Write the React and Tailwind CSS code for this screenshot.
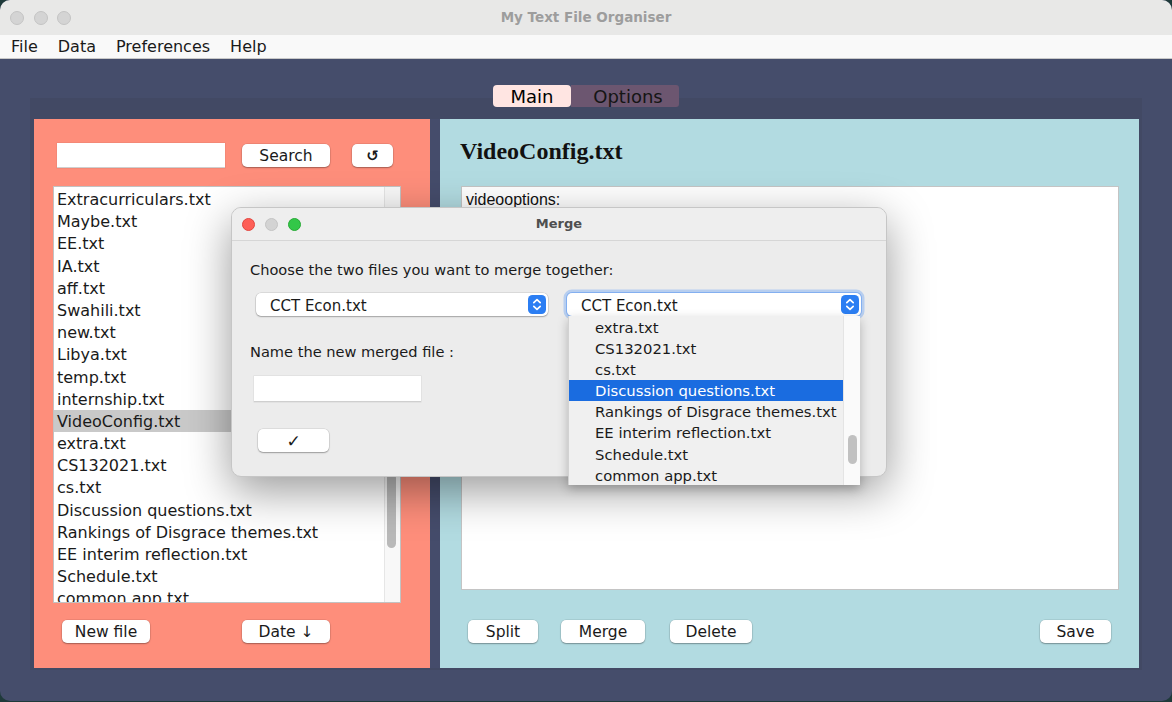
import React from "react";

const files = [
  "Extracurriculars.txt",
  "Maybe.txt",
  "EE.txt",
  "IA.txt",
  "aff.txt",
  "Swahili.txt",
  "new.txt",
  "Libya.txt",
  "temp.txt",
  "internship.txt",
  "VideoConfig.txt",
  "extra.txt",
  "CS132021.txt",
  "cs.txt",
  "Discussion questions.txt",
  "Rankings of Disgrace themes.txt",
  "EE interim reflection.txt",
  "Schedule.txt",
  "common app.txt",
];

const popupItems = [
  "extra.txt",
  "CS132021.txt",
  "cs.txt",
  "Discussion questions.txt",
  "Rankings of Disgrace themes.txt",
  "EE interim reflection.txt",
  "Schedule.txt",
  "common app.txt",
];

function Btn({ className, children }) {
  return (
    <div
      className={`h-[23px] pt-[2px] bg-white rounded-[5px] shadow-[0_0_0_0.5px_rgba(0,0,0,0.12),0_1px_1.5px_rgba(0,0,0,0.3)] flex items-center justify-center text-[#1a1a1a] shrink-0 ${className}`}
    >
      {children}
    </div>
  );
}

function Stepper() {
  return (
    <svg width="18" height="19" viewBox="0 0 18 19">
      <rect width="18" height="19" rx="4.5" fill="#2b7ef3" />
      <path d="M5.8 7.6 L9 4.6 L12.2 7.6" stroke="white" strokeWidth="1.7" fill="none" strokeLinecap="round" strokeLinejoin="round" />
      <path d="M5.8 11.4 L9 14.4 L12.2 11.4" stroke="white" strokeWidth="1.7" fill="none" strokeLinecap="round" strokeLinejoin="round" />
    </svg>
  );
}

function Combo({ className, focused }) {
  return (
    <div
      className={`h-[23px] bg-white rounded-[5px] flex items-center pl-[14px] pr-[2px] text-[15px] text-[#1a1a1a] ${
        focused
          ? "shadow-[0_0_0_1px_rgba(90,150,240,0.55),0_0_0_3.5px_rgba(120,170,245,0.45)]"
          : "shadow-[0_0_0_0.5px_rgba(0,0,0,0.15),0_1px_1.5px_rgba(0,0,0,0.25)]"
      } ${className}`}
    >
      <span className="flex-1 pt-[3px]">CCT Econ.txt</span>
      <Stepper />
    </div>
  );
}

export default function App() {
  return (
    <div className="w-[1172px] h-[702px] bg-[#1f3a3a] overflow-hidden font-['DejaVu_Sans',sans-serif] text-black">
      <div className="relative w-full h-[701px] rounded-[10px] overflow-hidden bg-[#454d6b] flex flex-col">
        {/* Title bar */}
        <div className="h-[35px] bg-[#e8e8e7] grid grid-cols-[1fr_auto_1fr] items-center shrink-0">
          <div className="flex items-center gap-[9.5px] pl-[10px]">
            <div className="w-[14px] h-[14px] rounded-full bg-[#d4d4d4] border border-[#c4c4c4]" />
            <div className="w-[14px] h-[14px] rounded-full bg-[#d4d4d4] border border-[#c4c4c4]" />
            <div className="w-[14px] h-[14px] rounded-full bg-[#d4d4d4] border border-[#c4c4c4]" />
          </div>
          <div className="text-[13.5px] font-bold text-[#9d9d9d]">My Text File Organiser</div>
          <div />
        </div>

        {/* Menu bar */}
        <div className="h-[24px] bg-[#f9f9f9] border-b border-[#c9c9c9] flex items-center pl-[11px] gap-[20px] text-[16px] text-[#1a1a1a] shrink-0">
          <span>File</span>
          <span>Data</span>
          <span>Preferences</span>
          <span>Help</span>
        </div>

        {/* Content */}
        <div className="flex-1 flex flex-col pt-[26px]">
          <div className="flex justify-center h-[22px] relative z-10 text-[18px]">
            <div className="w-[78px] h-[22px] bg-[#ffe5e2] rounded-[4px] flex items-center justify-center">Main</div>
            <div className="w-[108px] h-[22px] bg-[#6c5670] rounded-r-[3px] flex items-center justify-center pl-[6px] text-[#151515]">
              Options
            </div>
          </div>

          <div className="mt-[-9px] ml-[30px] w-[1112px] h-[572px] bg-[#424964] pt-[21px] pl-[4px] pr-[3px] pb-[2px] flex">
            {/* Left panel */}
            <div className="w-[396px] bg-[#fe8e7b] flex flex-col">
              <div className="mt-[24px] ml-[23px] flex items-start h-[25px]">
                <div className="w-[168px] h-[25px] bg-white border-b border-[#cfcfcf] shadow-[0_0_0_0.5px_rgba(0,0,0,0.08)]" />
                <Btn className="ml-[17px] mt-[1px] w-[88px] text-[15.5px]">Search</Btn>
                <Btn className="ml-[22px] mt-[1px] w-[41px] text-[15px] font-bold">↺</Btn>
              </div>

              <div className="mt-[18px] ml-[19px] w-[348px] h-[417px] bg-white border border-[#c2c2c2] flex overflow-hidden">
                <div className="flex-1 pt-[1px] overflow-hidden">
                  {files.map((f) => (
                    <div
                      key={f}
                      className={`h-[22.2px] leading-[22.2px] pt-[1px] pl-[3px] text-[16px] whitespace-nowrap text-[#1a1a1a] ${
                        f === "VideoConfig.txt" ? "bg-[#c9c9c9]" : ""
                      }`}
                    >
                      {f}
                    </div>
                  ))}
                </div>
                <div className="w-[16px] bg-[#f8f8f8] border-l border-[#e6e6e6] flex flex-col">
                  <div className="mt-[286px] ml-[2px] w-[9px] h-[75px] rounded-full bg-[#b9b9b9]" />
                </div>
              </div>

              <div className="mt-[17px] flex">
                <Btn className="ml-[28px] w-[88px] text-[15.5px]">New file</Btn>
                <Btn className="ml-[92px] w-[88px] text-[15.5px]">Date ↓</Btn>
              </div>
            </div>

            <div className="w-[10px] bg-[#454c6b]" />

            {/* Right panel */}
            <div className="flex-1 bg-[#b2dbe1] flex flex-col">
              <div className="mt-[18px] ml-[20px] h-[28px] leading-[28px] text-[24px] font-bold font-['Liberation_Serif',serif] text-[#111]">
                VideoConfig.txt
              </div>
              <div className="mt-[21px] ml-[21px] w-[658px] h-[404px] bg-white border border-[#c4c4c4] px-[4px] pt-[3px] font-['Liberation_Sans',sans-serif] text-[16px] leading-[20px] text-[#111]">
                videooptions:
              </div>
              <div className="mt-[30px] flex">
                <Btn className="ml-[28px] w-[70px] text-[15.5px]">Split</Btn>
                <Btn className="ml-[23px] w-[84px] text-[15.5px]">Merge</Btn>
                <Btn className="ml-[25px] w-[82px] text-[15.5px]">Delete</Btn>
                <Btn className="ml-auto mr-[28px] w-[71px] text-[15.5px]">Save</Btn>
              </div>
            </div>
          </div>
        </div>

        {/* Merge dialog */}
        <div className="absolute left-[231px] top-[207px] w-[656px] h-[270px] rounded-[10px] bg-[#ececec] border border-[#c6c6c6] shadow-[0_14px_45px_rgba(0,0,0,0.4)] flex flex-col overflow-hidden">
          <div className="h-[33px] border-b border-[#d6d6d6] bg-[#eeeeee] grid grid-cols-[1fr_auto_1fr] items-center shrink-0">
            <div className="flex items-center gap-[10px] pl-[9.5px]">
              <div className="w-[13px] h-[13px] rounded-full bg-[#fe5f57] border border-[#e2463f]" />
              <div className="w-[13px] h-[13px] rounded-full bg-[#d3d3d3] border border-[#c4c4c4]" />
              <div className="w-[13px] h-[13px] rounded-full bg-[#33c748] border border-[#27aa35]" />
            </div>
            <div className="text-[13px] font-bold text-[#4f4f4f]">Merge</div>
            <div />
          </div>
          <div className="flex flex-col pl-[18px] text-[14.6px] text-[#1a1a1a]">
            <div className="mt-[20px] h-[18px] leading-[18px]">Choose the two files you want to merge together:</div>
            <div className="mt-[14px] flex">
              <Combo className="ml-[6px] w-[292px]" />
              <Combo className="ml-[19px] w-[294px]" focused />
            </div>
            <div className="mt-[27px] h-[18px] leading-[18px]">Name the new merged file :</div>
            <div className="mt-[15px] ml-[4px] w-[167px] h-[26px] bg-white border-b border-[#cfcfcf] shadow-[0_0_0_0.5px_rgba(0,0,0,0.08)]" />
            <Btn className="mt-[27px] ml-[8px] w-[71px] text-[17px] font-bold">✓</Btn>
          </div>
        </div>

        {/* Combo popup list */}
        <div className="absolute left-[568px] top-[316px] w-[292px] h-[169px] bg-[#f0f0f0] border-l border-[#d2d2d2] shadow-[0_4px_10px_rgba(0,0,0,0.25)] flex overflow-hidden">
          <div className="flex-1">
            {popupItems.map((f) => (
              <div
                key={f}
                className={`h-[21.2px] leading-[19px] pt-[1.5px] pl-[26px] text-[14.8px] whitespace-nowrap ${
                  f === "Discussion questions.txt" ? "bg-[#1a6ce0] text-white" : "text-[#1a1a1a]"
                }`}
              >
                {f}
              </div>
            ))}
          </div>
          <div className="w-[17px] bg-[#fafafa] border-l border-[#e4e4e4] flex flex-col">
            <div className="mt-[119px] ml-[4px] w-[9px] h-[29px] rounded-full bg-[#c1c1c1]" />
          </div>
        </div>
      </div>
    </div>
  );
}
